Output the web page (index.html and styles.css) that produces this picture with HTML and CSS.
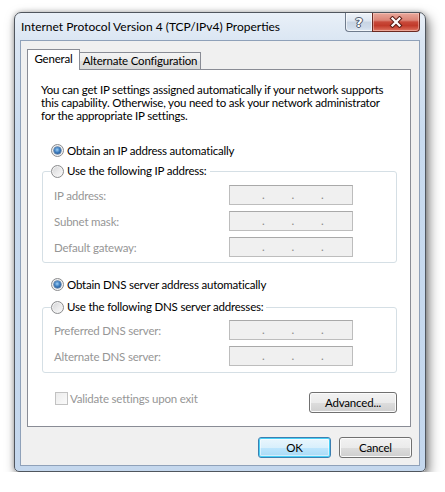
FILE: index.html
```html
<!DOCTYPE html>
<html>
<head>
<meta charset="utf-8">
<title>Internet Protocol Version 4 (TCP/IPv4) Properties</title>
<link rel="stylesheet" href="styles.css">
</head>
<body>
<div class="window">
  <div class="titlebar">
    <div class="title">Internet Protocol Version 4 (TCP/IPv4) Properties</div>
    <div class="caps">
      <div class="cap cap-help"><span>?</span></div>
      <div class="cap cap-close">
        <svg width="14" height="12" viewBox="0 0 14 12">
          <path d="M3.5 2.5 L10.5 9.5 M10.5 2.5 L3.5 9.5" stroke="#5b1d16" stroke-width="4.2" stroke-linecap="square" fill="none"/>
          <path d="M3.5 2.5 L10.5 9.5 M10.5 2.5 L3.5 9.5" stroke="#ffffff" stroke-width="2.2" stroke-linecap="square" fill="none"/>
        </svg>
      </div>
    </div>
  </div>
  <div class="client">
    <div class="tabs">
      <div class="tab active">General</div>
      <div class="tab alt">Alternate Configuration</div>
    </div>
    <div class="panel">
      <div class="desc">
        <div class="dl">You can get IP settings assigned automatically if your network supports</div>
        <div class="dl">this capability. Otherwise, you need to ask your network administrator</div>
        <div class="dl">for the appropriate IP settings.</div>
      </div>

      <div class="radio-row r-ip"><span class="radio checked"></span><span>Obtain an IP address automatically</span></div>
      <fieldset class="group g-ip">
        <legend><span class="lg"><span class="radio"></span><span>Use the following IP address:</span></span></legend>
        <div class="fields f-ip">
          <span class="lbl">IP address:</span>
          <div class="ipbox"><span class="dot">.</span><span class="dot">.</span><span class="dot">.</span></div>
          <span class="lbl">Subnet mask:</span>
          <div class="ipbox"><span class="dot">.</span><span class="dot">.</span><span class="dot">.</span></div>
          <span class="lbl">Default gateway:</span>
          <div class="ipbox"><span class="dot">.</span><span class="dot">.</span><span class="dot">.</span></div>
        </div>
      </fieldset>

      <div class="radio-row r-dns"><span class="radio checked"></span><span>Obtain DNS server address automatically</span></div>
      <fieldset class="group g-dns">
        <legend><span class="lg"><span class="radio"></span><span>Use the following DNS server addresses:</span></span></legend>
        <div class="fields f-dns">
          <span class="lbl">Preferred DNS server:</span>
          <div class="ipbox"><span class="dot">.</span><span class="dot">.</span><span class="dot">.</span></div>
          <span class="lbl">Alternate DNS server:</span>
          <div class="ipbox"><span class="dot">.</span><span class="dot">.</span><span class="dot">.</span></div>
        </div>
      </fieldset>

      <div class="panel-foot">
        <div class="check"><span class="cbox"></span><span>Validate settings upon exit</span></div>
        <div class="btn adv">Advanced...</div>
      </div>
    </div>
    <div class="dlg-btns">
      <div class="btn ok">OK</div>
      <div class="btn cancel">Cancel</div>
    </div>
  </div>
</div>
</body>
</html>
```

FILE: styles.css
```css
* { box-sizing: border-box; }
html, body { margin: 0; background: #ffffff; }
body {
  padding: 12px 0 0 14px;
  font-family: Lato, "Noto Sans", sans-serif;
  font-size: 11.5px;
  letter-spacing: -0.2px;
  color: #000;
}

.window {
  width: 412px;
  border: 1px solid #50565e;
  border-radius: 7px 7px 5px 5px;
  background: linear-gradient(#e9f0f8 0px, #dbe6f3 27px, #c9dbef 120px, #c4d7ed 100%);
  box-shadow: 3px 5px 12px rgba(0,0,0,0.5), 0 0 5px rgba(0,0,0,0.25);
  padding: 0 5px 5px;
}

.titlebar {
  height: 27px;
  display: flex;
  align-items: center;
}
.title {
  flex: 1;
  padding-left: 1px;
  font-size: 12px;
  letter-spacing: 0;
  line-height: 15px;
  white-space: nowrap;
}
.caps {
  align-self: flex-start;
  display: flex;
  height: 19px;
}
.cap {
  height: 19px;
  display: flex;
  align-items: center;
  justify-content: center;
  border: 1px solid #6f7b8c;
  border-top: none;
}
.cap-help {
  width: 27px;
  border-radius: 0 0 0 4px;
  border-right: none;
  background: linear-gradient(#eef3f9 0%, #dde6f1 45%, #c8d4e3 50%, #cfdbea 80%, #dde7f3 100%);
  box-shadow: inset 0 0 0 1px rgba(255,255,255,0.6);
}
.cap-help span {
  font-family: "DejaVu Sans", sans-serif;
  font-weight: bold;
  font-size: 13px;
  letter-spacing: 0;
  line-height: 13px;
  color: #ffffff;
  text-shadow: 0 0 1px #3c4656, 0 0 1px #3c4656, 1px 0 0 #59647a, -1px 0 0 #59647a, 0 1px 0 #59647a, 0 -1px 0 #59647a;
}
.cap-close {
  width: 48px;
  border-radius: 0 0 4px 0;
  border-color: #6b2a22;
  background: linear-gradient(#e9a99c 0%, #dc8577 40%, #c8493a 50%, #c13a2a 70%, #d4604e 90%, #e2826f 100%);
  box-shadow: inset 0 0 0 1px rgba(255,220,210,0.45);
}

.client {
  border: 1px solid #8fa1b9;
  background: #f0f0f0;
  padding: 8px 7px 7px 6px;
}

.tabs {
  display: flex;
  align-items: flex-end;
  height: 20px;
}
.tab {
  height: 17px;
  border: 1px solid #898c95;
  border-bottom: none;
  line-height: 15px;
  text-align: center;
  white-space: nowrap;
  background: linear-gradient(#f4f4f4 0%, #ebebeb 50%, #dedede 51%, #d8d8d8 100%);
}
.tab.active {
  position: relative;
  z-index: 1;
  width: 53px;
  height: 21px;
  margin-bottom: -1px;
  line-height: 17px;
  background: #ffffff;
}
.tab.alt {
  width: 122px;
  margin-left: -1px;
}

.panel {
  margin-right: 1px;
  border: 1px solid #898c95;
  background: #ffffff;
  padding: 0 13px 13px 0;
}

.desc {
  margin: 13px 0 0 13px;
}
.dl {
  line-height: 13px;
  height: 13px;
  white-space: nowrap;
}

.radio-row {
  display: flex;
  align-items: center;
  gap: 3px;
  height: 14px;
  padding-left: 23px;
  white-space: nowrap;
}
.r-ip { margin-top: 21px; }
.r-dns { margin-top: 14px; }

.radio {
  flex: none;
  display: inline-block;
  position: relative;
  width: 13px;
  height: 13px;
  border-radius: 50%;
  border: 1px solid #8b8c8e;
  background: linear-gradient(135deg, #d2d3d5 0%, #e9e9ea 50%, #fbfbfb 100%);
  box-shadow: inset 0 0 0 1px #f3f3f3;
}
.radio.checked::after {
  content: "";
  position: absolute;
  left: 2px;
  top: 2px;
  width: 7px;
  height: 7px;
  border-radius: 50%;
  background: radial-gradient(circle at 45% 40%, #9fd0f7 0%, #3f7fc0 45%, #1d4f8c 85%, #1a4680 100%);
  box-shadow: 0 0 0 0.5px #2b5a90;
}

.group {
  margin: 0 0 0 14px;
  padding: 0;
  border: 1px solid #d5dfe5;
  border-radius: 3px;
  min-width: 0;
}
.g-ip { margin-top: 7px; }
.g-dns { margin-top: 9px; }
.group legend {
  margin-left: 8px;
  padding: 0 3px 0 0;
  line-height: 14px;
  height: 14px;
}
.lg {
  display: flex;
  align-items: center;
  gap: 3px;
  height: 14px;
  white-space: nowrap;
}

.fields {
  display: grid;
  grid-template-columns: 175px 124px;
  grid-auto-rows: 20px;
  row-gap: 6px;
  padding-left: 11px;
  align-items: center;
}
.f-ip { padding-top: 7px; padding-bottom: 5px; }
.f-dns { padding-top: 6px; padding-bottom: 6px; }

.lbl {
  color: #969696;
  white-space: nowrap;
}
.ipbox {
  height: 20px;
  border: 1px solid #bdbdbd;
  border-top-color: #a9a9a9;
  background: #f0f0f0;
  display: flex;
  padding-left: 32px;
  line-height: 17px;
  color: #8a8a8a;
}
.dot {
  width: 29.5px;
}

.panel-foot {
  margin-top: 19px;
  display: flex;
  justify-content: space-between;
  align-items: flex-start;
  padding-left: 27px;
}
.check {
  display: flex;
  align-items: center;
  gap: 2px;
  height: 13px;
  color: #969696;
  white-space: nowrap;
}
.cbox {
  width: 13px;
  height: 13px;
  border: 1px solid #c2c2c2;
  background: linear-gradient(135deg, #ececec, #fafafa);
}

.btn {
  height: 21px;
  border: 1px solid #707070;
  border-radius: 3px;
  background: linear-gradient(#f2f2f2 0%, #ebebeb 50%, #dddddd 51%, #cfcfcf 100%);
  box-shadow: inset 0 0 0 1px #fbfbfb;
  display: flex;
  align-items: center;
  justify-content: center;
  white-space: nowrap;
}
.adv { width: 88px; }

.dlg-btns {
  margin-top: 10px;
  display: flex;
  justify-content: flex-end;
  gap: 8px;
}
.ok, .cancel { width: 73px; }
.ok {
  border-color: #3c7fb1;
  background: linear-gradient(#eaf6fd 0%, #d9f0fc 50%, #bee6fd 51%, #a7d9f5 100%);
  box-shadow: inset 0 0 0 1px #48d0f6, inset 0 0 0 2px rgba(255,255,255,0.5);
}
```
